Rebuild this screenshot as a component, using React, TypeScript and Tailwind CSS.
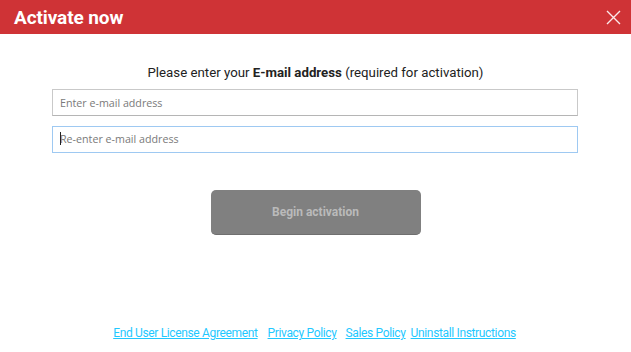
import React from 'react';

const LINKS = ['End User License Agreement', 'Privacy Policy', 'Sales Policy', 'Uninstall Instructions'];

const App: React.FC = () => {
  return (
    <div className="w-[631px] h-[352px] bg-white flex flex-col overflow-hidden" style={{ fontFamily: 'Roboto, "Liberation Sans", sans-serif' }}>
      {/* title bar */}
      <div className="h-[34px] bg-[#cf3336] flex items-center justify-between pl-[14px] pr-[10px] shrink-0">
        <h1 className="text-white font-bold text-[19px] leading-none tracking-[-0.1px]">Activate now</h1>
        <button className="w-[16px] h-[16px] flex items-center justify-center" aria-label="Close">
          <svg width="15" height="15" viewBox="0 0 15 15" fill="none">
            <path d="M1 1L14 14M14 1L1 14" stroke="#fbe9e9" strokeWidth="1.4" />
          </svg>
        </button>
      </div>

      {/* form */}
      <div className="flex flex-col items-center">
        <p className="mt-[31px] text-[13.25px] leading-[16px] text-[#222]">
          Please enter your <span className="font-bold">E-mail address</span> (required for activation)
        </p>

        <div className="mt-[8px] self-start ml-[52px] w-[526px] flex flex-col gap-[9px]" style={{ fontFamily: '"Open Sans", "Noto Sans", sans-serif' }}>
          <input
            className="h-[27px] w-full border border-[#c9c9c9] border-b-[#b5b5b5] px-[7px] text-[10.7px] text-[#333] placeholder:text-[#7a7a7a] outline-none"
            placeholder="Enter e-mail address"
          />
          <div className="relative">
            <input
              className="h-[27px] w-full border border-[#9ec9f2] px-[7px] text-[10.7px] text-[#333] placeholder:text-[#7a7a7a] outline-none"
              placeholder="Re-enter e-mail address"
            />
            <span className="absolute left-[8px] top-[7px] w-px h-[13px] bg-[#222]" />
          </div>
        </div>

        <button className="mt-[37px] w-[210px] h-[45px] rounded-[5px] bg-[#808080] border-b border-[#6f6f6f] text-[#bababa] text-[12px] font-bold">
          Begin activation
        </button>
      </div>

      {/* footer links */}
      <div className="mt-auto mb-[12px] flex justify-center pr-[2px]">
        <div className="flex text-[12px] leading-[14px] tracking-[-0.35px]">
          {LINKS.map((l, i) => (
            <a
              key={l}
              href="#"
              className={`text-[#1fc8ff] underline underline-offset-[1px] ${i === 0 ? 'mr-[10px]' : i === 1 ? 'mr-[9px]' : i === 2 ? 'mr-[5px]' : ''}`}
            >
              {l}
            </a>
          ))}
        </div>
      </div>
    </div>
  );
};

export default App;
